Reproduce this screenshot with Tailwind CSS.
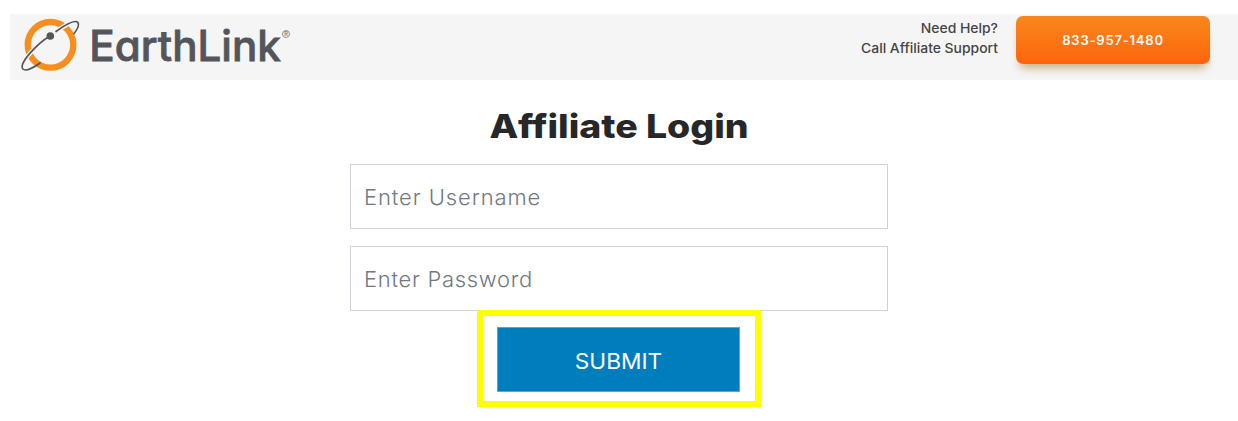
<!DOCTYPE html>
<html lang="en">
<head>
<meta charset="utf-8">
<title>Affiliate Login</title>
<script src="https://cdn.jsdelivr.net/npm/@tailwindcss/browser@4"></script>
</head>
<body class="bg-white font-['Inter',sans-serif] overflow-hidden">
<header class="mt-3.5 ml-2.5 h-[66px] bg-[#f5f5f5] flex items-start justify-between pr-[28px]">
  <svg class="w-[290px] h-[66px]" viewBox="10 14 290 66" role="img" aria-label="EarthLink">
    <circle cx="50.5" cy="44.8" r="22.8" fill="none" stroke="#f78e1e" stroke-width="6.3"/>
    <g fill="none" stroke-linecap="round">
      <path d="M50 36C38 43 18.5 63 23 69C23.5 69.5 24 69.800 25 70" stroke="#f5f5f5" stroke-width="4.5"/>
      <path d="M56 31.5C65 25 75 19.5 78 22.5" stroke="#f5f5f5" stroke-width="4.5"/>
      <path d="M50 36C38 43 18.5 63 22.8 69C25.5 71.5 33 68 40 63" stroke="#54555b" stroke-width="1.7"/>
      <path d="M56 31.5C65 25 75 19.5 78 22.5C79.5 25.5 77 30 74 33.5" stroke="#54555b" stroke-width="1.7"/>
    </g>
    <circle cx="50.3" cy="36" r="3.8" fill="#54555b"/>
    <text x="89.3" y="61.4" font-size="42.5" font-weight="500" fill="#54555b" stroke="#54555b" stroke-width=".8" textLength="191.5" lengthAdjust="spacingAndGlyphs" class="[font-feature-settings:'cv11']">EarthLink</text>
    <circle cx="286" cy="34" r="3.5" fill="none" stroke="#77787c" stroke-width=".8"/>
    <text x="284.2" y="36" font-size="5.5" font-weight="600" fill="#77787c">R</text>
  </svg>
  <div class="flex items-start">
    <p class="mt-[5px] mr-[18px] text-right text-[13px] leading-[19.5px] font-medium text-[#444] whitespace-nowrap origin-right scale-x-[1.07]"><span>Need Help?</span><br><span>Call Affiliate Support</span></p>
    <a class="mt-0.5 w-[194px] h-[48px] rounded-[7px] bg-linear-to-b from-[#fa871b] to-[#fd640d] shadow-[0_8px_9px_-4px_rgba(150,110,20,.5)] flex items-center justify-center pt-0.5 text-white text-[13px] font-semibold"><span class="tracking-[.8px]">833-957-1480</span></a>
  </div>
</header>
<main class="ml-[350px] w-[538px] flex flex-col items-center">
  <h1 class="mt-[25px] h-[43px] leading-[42px] text-[33px] font-extrabold text-[#262729] whitespace-nowrap scale-x-[1.135]">Affiliate Login</h1>
  <form class="w-full flex flex-col items-center">
    <input class="mt-4 h-[65px] w-full border border-[#ced2d9] px-[13px] text-[22px] tracking-[.9px] font-light placeholder:text-[#717980]" placeholder="Enter Username">
    <input type="password" class="mt-[17px] h-[65px] w-full border border-[#ced2d9] px-[13px] text-[22px] tracking-[.7px] font-light placeholder:text-[#717980]" placeholder="Enter Password">
    <div class="-mt-px w-[284px] h-[97px] border-[6px] border-[#ffff00] flex items-start pl-[14px] pt-[11px]">
      <button type="button" class="w-[243px] h-[65px] bg-[#007dbc] border border-[#55a9d2] text-white text-[21px] pt-1"><span class="inline-block scale-x-[1.08]">SUBMIT</span></button>
    </div>
  </form>
</main>
</body>
</html>
